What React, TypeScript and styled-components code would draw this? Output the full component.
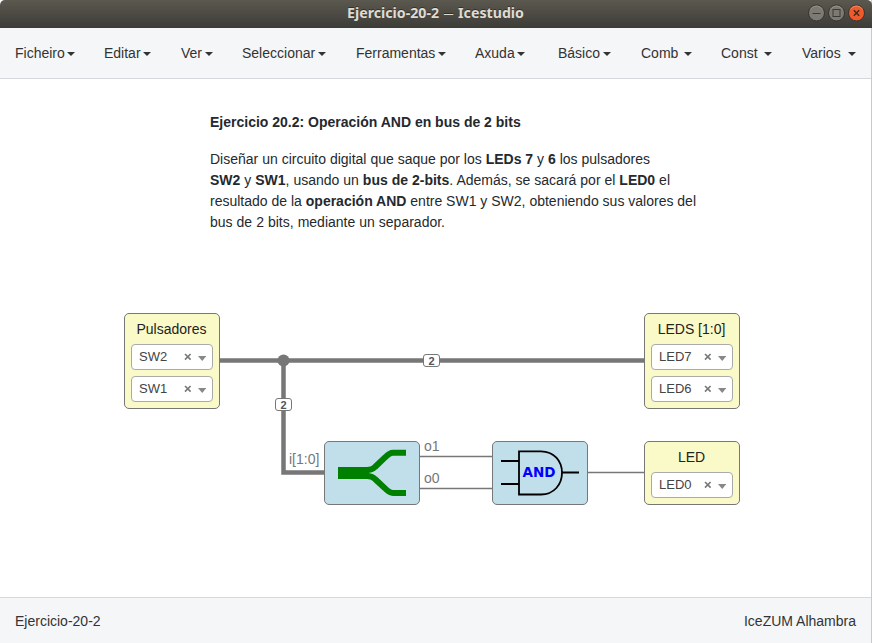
import React from "react";
import styled, { createGlobalStyle } from "styled-components";

const GlobalStyle = createGlobalStyle`
  * { box-sizing: border-box; }
  html, body { margin: 0; padding: 0; overflow: hidden; background: #fff; }
  body { font-family: "Liberation Sans", Arial, sans-serif; font-size: 14px; color: #333; }
`;

const Window = styled.div`
  width: 872px;
  height: 643px;
  display: flex;
  flex-direction: column;
  border-right: 1px solid #c9c9c9;
  background: #fff;
`;

const TitleBar = styled.header`
  flex: 0 0 28px;
  width: 872px;
  display: grid;
  grid-template-columns: 1fr auto 1fr;
  align-items: center;
  padding: 0 7px 2px 0;
  background: linear-gradient(#5b584f, #3d3c37);
  border-radius: 5px 5px 0 0;
`;

const Title = styled.h1`
  grid-column: 2;
  width: 177px;
  margin: 0 0 0 6px;
  display: flex;
  justify-content: space-between;
  font: bold 14.2px/20px "Noto Sans", sans-serif;
  color: #dfdbd2;
  white-space: nowrap;
  text-shadow: 0 -1px 0 rgba(0, 0, 0, 0.4);
`;

const Dash = styled.span`
  font-weight: normal;
  font-size: 10px;
`;

const Controls = styled.div`
  display: flex;
  justify-content: flex-end;
  gap: 3px;
  svg { display: block; }
`;

const MenuBar = styled.nav`
  flex: 0 0 51px;
  display: flex;
  background: #f5f6f8;
  border-bottom: 1px solid #d5d9dd;
  padding-left: 15px;
`;

const MenuItem = styled.div<{ $width: number }>`
  flex: 0 0 ${(p) => p.$width}px;
  display: flex;
  align-items: center;
  line-height: 20px;
`;

const MenuLabel = styled.span<{ $text: number; $gap: number }>`
  width: ${(p) => p.$text}px;
  margin-right: ${(p) => p.$gap}px;
  white-space: nowrap;
`;

const Caret = styled.i`
  border: 4px solid transparent;
  border-top-color: #333;
  border-bottom: 0;
  margin-top: 2px;
`;

const Canvas = styled.main`
  flex: 1;
  position: relative;
`;

const Info = styled.article`
  position: absolute;
  left: 210px;
  top: 33px;
  line-height: 21px;
  color: #24292e;
`;

const Line = styled.div<{ $width: number }>`
  width: ${(p) => p.$width}px;
  white-space: nowrap;
  text-align-last: justify;
`;

const Heading = styled.div`
  margin-bottom: 16px;
  font-weight: bold;
`;

const Wires = styled.svg`
  position: absolute;
  left: 0;
  top: 0;
`;

const Block = styled.section<{ $x: number; $y: number; $h: number; $kind?: "io" | "gate" }>`
  position: absolute;
  left: ${(p) => p.$x}px;
  top: ${(p) => p.$y}px;
  width: 96px;
  height: ${(p) => p.$h}px;
  padding: ${(p) => (p.$kind === "gate" ? "0" : "5px 6px")};
  border: 1px solid #777;
  border-radius: 5px;
  background: ${(p) => (p.$kind === "gate" ? "#c0dfeb" : "#fafac8")};
  svg { display: block; }
`;

const BlockTitle = styled.div`
  height: 25px;
  padding-right: 1px;
  line-height: 20px;
  text-align: center;
  color: #222;
`;

const Select = styled.div`
  height: 26px;
  margin-bottom: 6px;
  padding: 0 6px 0 7px;
  display: flex;
  align-items: center;
  background: #fff;
  border: 1px solid #aaa;
  border-radius: 4px;
  font-size: 13px;
  color: #444;
`;

const Pin = styled.span`
  flex: 0 0 45px;
  padding-bottom: 2px;
`;

const SelectIcons = styled.svg`
  flex: none;
`;

const BusSize = styled.span<{ $x: number; $y: number }>`
  position: absolute;
  left: ${(p) => p.$x}px;
  top: ${(p) => p.$y}px;
  width: 17px;
  height: 13px;
  border: 1px solid #777;
  border-radius: 3px;
  background: #fff;
  font: bold 11px/12px "Liberation Sans", Arial, sans-serif;
  text-align: center;
  color: #555;
`;

const PortLabel = styled.span<{ $x: number; $y: number }>`
  position: absolute;
  left: ${(p) => p.$x}px;
  top: ${(p) => p.$y}px;
  line-height: 16px;
  color: #777;
`;

const StatusBar = styled.footer`
  flex: 0 0 46px;
  display: flex;
  justify-content: space-between;
  align-items: center;
  padding: 1px 15px 0 15px;
  border-top: 1px solid #d5d9dd;
  background: #f5f6f8;
`;

const menus: { label: string; width: number; text: number; gap: number }[] = [
  { label: "Ficheiro", width: 89, text: 50, gap: 2 },
  { label: "Editar", width: 77, text: 37, gap: 2 },
  { label: "Ver", width: 61, text: 22, gap: 2 },
  { label: "Seleccionar", width: 114, text: 74, gap: 2 },
  { label: "Ferramentas", width: 119, text: 80, gap: 2 },
  { label: "Axuda", width: 83, text: 40, gap: 2 },
  { label: "Básico", width: 83, text: 43, gap: 2 },
  { label: "Comb", width: 80, text: 38, gap: 5 },
  { label: "Const", width: 81, text: 38, gap: 5 },
  { label: "Varios", width: 60, text: 41, gap: 5 },
];

function WindowButton({ kind }: { kind: "min" | "max" | "close" }) {
  const close = kind === "close";
  return (
    <svg width="17" height="18" viewBox="0 0 17 18">
      <circle cx="8.5" cy="9" r="8" fill={close ? "#ee5a2c" : "#7c7a73"} stroke="#35342f" />
      <path d="M2.5 5.5a7 7 0 0 1 12 0" fill="none" stroke={close ? "#f48a66" : "#96948c"} />
      {kind === "min" && <path d="M4.5 9.5h8" stroke="#3b3a35" />}
      {kind === "max" && <rect x="5" y="5.5" width="7" height="7" fill="none" stroke="#3b3a35" />}
      {close && <path d="M5.8 6.3l5.4 5.4m0-5.4l-5.4 5.4" stroke="#3b2a20" strokeWidth="1.4" />}
    </svg>
  );
}

function PinSelect({ value }: { value: string }) {
  return (
    <Select>
      <Pin>{value}</Pin>
      <SelectIcons width="23" height="12" viewBox="0 0 23 12">
        <path d="M1 3l5.6 5.6m0-5.6l-5.6 5.6" stroke="#777" strokeWidth="1.6" />
        <path d="M14 5h8.4l-4.2 5z" fill="#888" />
      </SelectIcons>
    </Select>
  );
}

export default function App() {
  return (
    <Window>
      <GlobalStyle />
      <TitleBar>
        <Title>
          <span>Ejercicio-20-2</span>
          <Dash>—</Dash>
          <span>Icestudio</span>
        </Title>
        <Controls>
          <WindowButton kind="min" />
          <WindowButton kind="max" />
          <WindowButton kind="close" />
        </Controls>
      </TitleBar>
      <MenuBar>
        {menus.map((m) => (
          <MenuItem key={m.label} $width={m.width}>
            <MenuLabel $text={m.text} $gap={m.gap}>{m.label}</MenuLabel>
            <Caret />
          </MenuItem>
        ))}
      </MenuBar>
      <Canvas>
        <Info>
          <Heading>
            <Line $width={310}>Ejercicio 20.2: Operación AND en bus de 2 bits</Line>
          </Heading>
          <Line $width={440}>
            Diseñar un circuito digital que saque por los <b>LEDs 7</b> y <b>6</b> los pulsadores
          </Line>
          <Line $width={460}>
            <b>SW2</b> y <b>SW1</b>, usando un <b>bus de 2-bits</b>. Además, se sacará por el <b>LED0</b> el
          </Line>
          <Line $width={486}>
            resultado de la <b>operación AND</b> entre SW1 y SW2, obteniendo sus valores del
          </Line>
          <Line $width={235}>bus de 2 bits, mediante un separador.</Line>
        </Info>
        <Wires width="871" height="518" viewBox="0 79 871 518" fill="none" stroke="#777">
          <path d="M220 360.5H644M283.5 360V472.5H324" strokeWidth="4.5" />
          <path d="M420 456.5H492M420 488.5H492M588 472.5H644" strokeWidth="1.4" />
          <circle cx="283.5" cy="360.5" r="6" fill="#777" stroke="none" />
        </Wires>
        <BusSize $x={423} $y={275}>2</BusSize>
        <BusSize $x={275} $y={319}>2</BusSize>
        <PortLabel $x={289} $y={372}>i[1:0]</PortLabel>
        <PortLabel $x={424} $y={359}>o1</PortLabel>
        <PortLabel $x={424} $y={391}>o0</PortLabel>
        <Block $x={124} $y={234} $h={96}>
          <BlockTitle>Pulsadores</BlockTitle>
          <PinSelect value="SW2" />
          <PinSelect value="SW1" />
        </Block>
        <Block $x={644} $y={234} $h={96}>
          <BlockTitle>LEDS [1:0]</BlockTitle>
          <PinSelect value="LED7" />
          <PinSelect value="LED6" />
        </Block>
        <Block $x={644} $y={362} $h={64}>
          <BlockTitle>LED</BlockTitle>
          <PinSelect value="LED0" />
        </Block>
        <Block $x={324} $y={362} $h={64} $kind="gate">
          <svg width="94" height="62" viewBox="325 442 94 62" fill="none" stroke="green">
            <path d="M338 473H369" strokeWidth="12" />
            <path d="M367 470C371 470 373 469 375 467L385 457.500Q389.500 452.700 393 452.700H406" strokeWidth="6" />
            <path d="M367 476C371 476 373 477 375 479L385 488.300Q389.500 493 393 493H406" strokeWidth="6" />
          </svg>
        </Block>
        <Block $x={492} $y={362} $h={64} $kind="gate">
          <svg width="94" height="62" viewBox="493 442 94 62" fill="none" stroke="#000" strokeWidth="1.8">
            <path d="M501 461H519M501 484H519M562 472.5H579" />
            <path d="M519 451.3H541C554 451.3 562 461 562 472.7S554 494.5 541 494.5H519Z" />
            <text x="522.5" y="477" fill="#00f" stroke="none" fontFamily="DejaVu Sans" fontWeight="bold" fontSize="13.3" textLength="33" lengthAdjust="spacingAndGlyphs">
              AND
            </text>
          </svg>
        </Block>
      </Canvas>
      <StatusBar>
        <span>Ejercicio-20-2</span>
        <span>IceZUM Alhambra</span>
      </StatusBar>
    </Window>
  );
}
